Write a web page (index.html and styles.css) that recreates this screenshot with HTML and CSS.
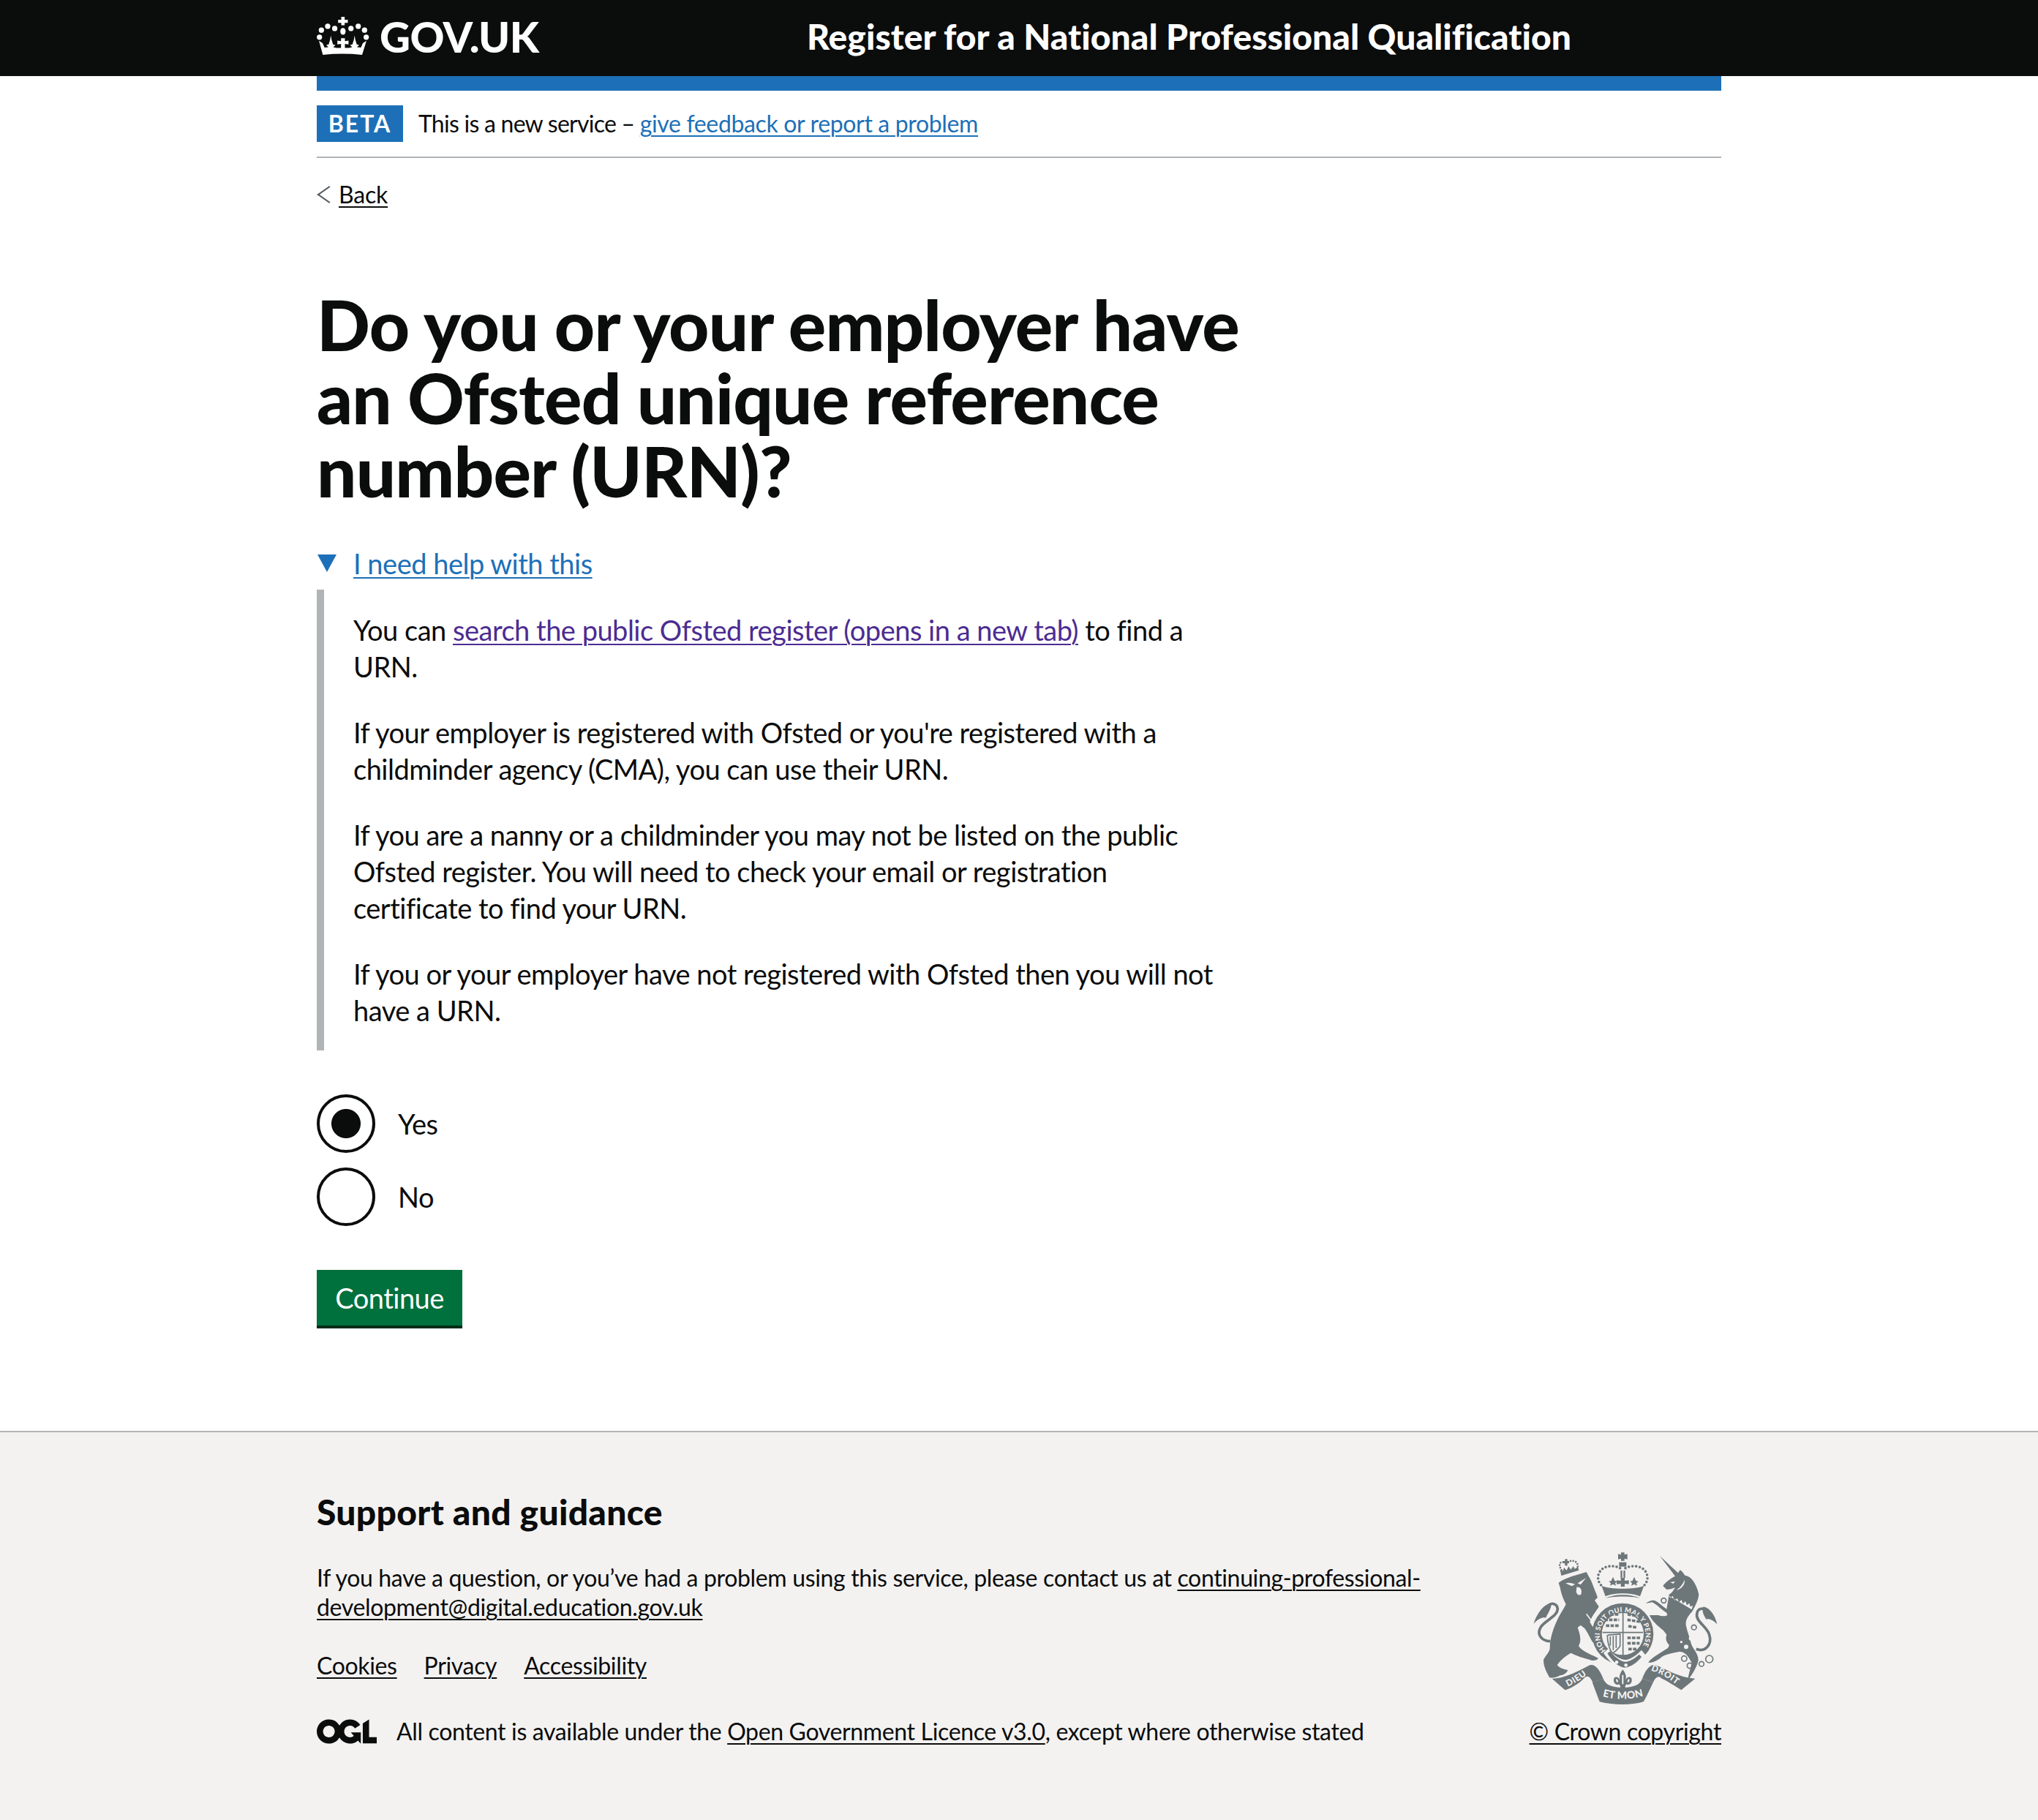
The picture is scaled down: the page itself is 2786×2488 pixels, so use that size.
FILE: index.html
```html
<!DOCTYPE html>
<html lang="en">
<head>
  <meta charset="UTF-8" />
  <title>Do you or your employer have an Ofsted unique reference number (URN)?</title>
  <link rel="stylesheet" href="styles.css">
</head>
<body>

<header class="site-header">
  <div class="header-inner">
    <a href="#" class="logo">
      <svg class="crown" viewBox="40 40 215 160" aria-hidden="true">
        <path d="M140 40h14v12h13v13h-13v10h-14V65h-13V52h13z" />
        <ellipse cx="147" cy="100" rx="11" ry="14" />
        <circle cx="113" cy="88" r="11" />
        <circle cx="180" cy="88" r="11" />
        <circle cx="84" cy="79" r="11" />
        <circle cx="210" cy="79" r="11" />
        <circle cx="58" cy="95" r="11" />
        <circle cx="236" cy="95" r="11" />
        <circle cx="50" cy="124" r="11" />
        <circle cx="243" cy="124" r="11" />
        <path d="M48 139l15 10 8 18 16-2-9-9 10-2 6-20 3-17 3 17 6 20 10 2-9 9 14 3h50l14-3-9-9 10-2 6-20 3-17 3 17 6 20 10 2-9 9 16 2 8-18 15-10-18 58q-81-9-162 0z" />
        <path d="M139 128h16v12l15-2v16l-15-2v18h-16v-18l-15 2v-16l15 2z" />
      </svg>
      <span class="logo-text">GOV.UK</span>
    </a>
    <a href="#" class="service-name">Register for a National Professional Qualification</a>
  </div>
</header>

<div class="container">
  <div class="header-rule"></div>

  <div class="phase-banner">
    <strong class="tag">BETA</strong>
    <span class="phase-text">This is a new service – <a href="#" class="link">give feedback or report a problem</a></span>
  </div>

  <a href="#" class="back-link">Back</a>

  <main class="content">
    <h1>Do you or your employer have an Ofsted unique reference number (URN)?</h1>

    <details class="help" open>
      <summary><span class="link">I need help with this</span></summary>
      <div class="help-text">
        <p>You can <a href="#" class="link visited">search the public Ofsted register (opens in a new tab)</a> to find a URN.</p>
        <p>If your employer is registered with Ofsted or you're registered with a childminder agency (CMA), you can use their URN.</p>
        <p>If you are a nanny or a childminder you may not be listed on the public Ofsted register. You will need to check your email or registration certificate to find your URN.</p>
        <p>If you or your employer have not registered with Ofsted then you will not have a URN.</p>
      </div>
    </details>

    <form>
      <div class="radios">
        <label class="radio"><input type="radio" name="urn" checked /><span>Yes</span></label>
        <label class="radio"><input type="radio" name="urn" /><span>No</span></label>
      </div>
      <button type="button">Continue</button>
    </form>
  </main>
</div>

<footer class="site-footer">
  <div class="footer-inner">
    <div class="footer-main">
      <h2>Support and guidance</h2>
      <p>If you have a question, or you’ve had a problem using this service, please contact us at <a href="#">continuing-professional-development@digital.education.gov.uk</a></p>
      <ul class="footer-links">
        <li><a href="#">Cookies</a></li>
        <li><a href="#">Privacy</a></li>
        <li><a href="#">Accessibility</a></li>
      </ul>
      <div class="licence">
        <svg class="ogl" viewBox="0 0 483.2 195.7" aria-hidden="true">
          <path d="M421.5 142.8V.1l-50.7 32.3v161.1h112.4v-50.7zm-122.3-9.6A47.12 47.12 0 0 1 221 97.8c0-26 21.1-47.1 47.1-47.1 16.7 0 31.4 8.7 39.7 21.8l42.7-27.2A97.63 97.63 0 0 0 268.1 0c-36.5 0-68.3 20.1-85.1 49.7A98 98 0 0 0 97.8 0C43.9 0 0 43.9 0 97.8s43.9 97.8 97.8 97.8c36.5 0 68.3-20.1 85.1-49.7a97.76 97.76 0 0 0 149.6 25.4l19.4 22.2h3v-87.8h-80l24.3 27.5zM97.8 145c-26 0-47.1-21.1-47.1-47.1s21.1-47.1 47.1-47.1 47.2 21 47.2 47S123.8 145 97.8 145" />
        </svg>
        <span>All content is available under the <a href="#">Open Government Licence v3.0</a>, except where otherwise stated</span>
      </div>
    </div>

    <div class="footer-side">
      <svg class="crest" viewBox="0 0 780 660" aria-hidden="true">
        <defs>
          <path id="garter" d="M318 432 A94 94 0 1 1 452 432" />
          <path id="ribbon-left" d="M160 578 Q208 556 254 516" />
          <path id="ribbon-mid" d="M302 618 Q385 640 472 616" />
          <path id="ribbon-right" d="M500 512 Q552 526 618 580" />
        </defs>

        <!-- couronne du lion -->
        <path class="dots small" d="M134 100C115 70 135 60 153 72 170 55 205 60 200 88" />
        <path d="M148 55h10v8h7v9h-7v10h-10V72h-7v-9h7z" />
        <path d="M128 98l12 6 4-14 11 11 8-16 9 13 10-14 6 11 13-8 4 14-72 22z" />

        <!-- lion -->
        <path d="M122 152C150 130 205 118 236 108 244 125 252 135 258 150 266 172 276 195 282 212L270 224 287 250C278 268 262 282 250 312 262 340 290 360 300 392 290 402 272 402 262 396 250 378 240 352 228 338L212 326 200 336C208 360 218 385 204 412 222 438 262 448 285 462 280 470 262 474 250 468 222 460 196 452 172 440 152 452 130 468 116 490 128 504 148 508 160 510 155 522 142 532 128 532 118 540 96 544 84 540 74 520 60 498 60 468 68 450 84 438 86 422 86 380 100 340 116 306 128 280 144 258 152 240 142 222 132 198 128 172z" />
        <path class="cut" d="M150 154C162 150 175 152 190 158L176 166zM235 132L200 154 212 160zM196 170C212 168 220 182 214 200 206 206 196 200 194 188z" />
        <path class="line thin cut-line" d="M236 280L296 362" />
        <path class="line" d="M88 392C50 390 30 362 50 332 70 304 118 290 118 258 115 238 95 232 80 244" />
        <path d="M92 238C60 236 30 285 20 320 40 298 58 292 70 296 76 278 92 262 92 238z" />

        <!-- couronne centrale -->
        <path d="M378 28h14v9l12-3v22l-12-3v9h-14v-9l-12 3V34l12 3z" />
        <path d="M370 68h30v18h-30z" />
        <path class="dots" d="M374 92C345 78 305 82 290 108 278 130 284 150 300 166" />
        <path class="dots" d="M396 92C425 78 465 82 480 108 492 130 486 150 470 166" />
        <path d="M376 102h7v30h-7zM388 102h7v30h-7z" />
        <path d="M345 128l7 16 10 2-8 8 3 10-12-6-12 6 3-10-8-8 10-2zM432 128l7 16 10 2-8 8 3 10-12-6-12 6 3-10-8-8 10-2z" />
        <path d="M377 132h16v12l17-2v16l-17-2v12h-16v-12l-17 2v-16l17 2z" />
        <path d="M298 164C330 180 440 180 472 164L456 208C420 192 350 192 314 208z" />
        <path d="M312 218C340 196 430 196 458 218 440 205 330 205 312 218z" />

        <!-- jarretiere et ecu -->
        <circle cx="385" cy="362" r="126" />
        <circle class="cut" cx="385" cy="362" r="86" />
        <text class="crest-text garter-text"><textPath href="#garter" startOffset="3">HONI SOIT QUI MAL Y PENSE</textPath></text>
        <path class="line thin" d="M386 262v190M302 356h166" />
        <g class="beasts">
          <path d="M315 282h56M310 304h60M316 328h52" />
          <path d="M405 282l40 6M404 304l52 8M408 330l36 6" />
          <path d="M404 378h52M404 400h50M408 424h36" />
        </g>
        <path class="line thin" d="M322 368C340 362 360 366 374 362V412C362 428 352 438 342 440 330 425 322 395 322 368z" />
        <path class="line thin" d="M334 372v38M346 370v58M358 368v52" />
        <path class="cut" d="M306 440L326 422C345 450 380 470 400 468 425 462 445 445 462 428L478 448C455 480 425 505 390 508 360 505 330 475 306 440z" />
        <path d="M322 442L334 432C350 455 378 478 400 476 420 472 440 458 452 446L462 456C445 478 420 498 392 500 365 498 340 470 322 442z" />
        <circle class="cut" cx="360" cy="478" r="7" />
        <circle class="cut" cx="398" cy="490" r="7" />

        <!-- licorne -->
        <path d="M537 42L612 112 620 100C630 105 635 115 640 122 670 125 690 165 697 200 695 225 680 250 670 270 650 290 640 310 645 330 650 355 660 375 665 400 672 425 695 440 695 470 690 495 672 525 655 548 650 540 662 510 668 480 655 455 640 432 615 435 590 440 560 445 545 456 530 470 510 480 490 480 495 465 530 445 570 420L576 408C566 398 558 385 565 365L552 348C530 330 505 310 495 285L530 285C545 290 560 290 568 285L565 275C545 265 525 240 505 232L480 237C490 228 505 222 515 225 530 230 550 250 565 260L575 200C585 195 592 185 600 172 590 175 575 180 565 180L550 165C560 150 580 135 600 125z" />
        <path class="cut" d="M572 204L668 262 672 246 662 250 658 236 648 244 642 228 632 238 626 222 616 232 608 216 598 224 590 206 580 214z" />
        <path class="cut" d="M580 150L600 146 592 156zM638 140C642 160 625 178 605 182 620 172 632 158 638 140z" />
        <circle class="cut" cx="665" cy="380" r="9" />
        <circle class="cut" cx="645" cy="415" r="9" />
        <circle class="cut" cx="625" cy="395" r="5" />
        <g class="rings">
          <circle cx="553" cy="225" r="10" />
          <circle cx="540" cy="310" r="10" />
          <circle cx="677" cy="335" r="10" />
          <circle cx="637" cy="463" r="11" />
          <circle cx="660" cy="492" r="11" />
          <circle cx="708" cy="485" r="10" />
          <circle cx="740" cy="465" r="15" />
        </g>
        <path class="line" d="M686 424C725 438 752 405 740 365 730 330 680 310 690 275 695 255 715 255 728 264" />
        <path d="M716 250C745 256 765 290 772 322 752 302 738 298 728 302 716 285 708 268 716 250z" />

        <!-- devise -->
        <path d="M95 545C150 545 210 510 250 490 275 482 295 520 305 545L262 560C250 535 240 530 225 545 200 570 170 585 148 592z" />
        <path d="M260 560L305 545C315 570 335 580 385 582 435 580 455 570 465 545L510 560C495 590 480 625 470 640 420 655 350 655 290 640z" />
        <path d="M465 545C478 510 498 485 520 490 560 505 610 540 682 545L625 592C590 570 560 550 545 545 530 530 520 540 510 560z" />
        <text class="crest-text"><textPath href="#ribbon-left">DIEU</textPath></text>
        <text class="crest-text mid-text"><textPath href="#ribbon-mid">ET MON</textPath></text>
        <text class="crest-text"><textPath href="#ribbon-right">DROIT</textPath></text>
        <path d="M385 508C396 522 402 538 396 552 404 534 424 534 422 554 420 570 406 572 400 568L394 578 402 590H392L385 600 378 590H368L376 578 370 568C364 572 350 570 348 554 346 534 366 534 374 552 368 538 374 522 385 508z" />
        <path class="cut" d="M382 530h6v38h-6zM358 546q8 2 8 14-10 2-8-14zM412 546q-8 2-8 14 10 2 8-14z" />
      </svg>
      <a href="#">© Crown copyright</a>
    </div>
  </div>
</footer>

</body>
</html>
```
FILE: styles.css
```css
* {
  box-sizing: border-box;
}

body {
  margin: 0;
  min-height: 100vh;
  display: flex;
  flex-direction: column;
  font-family: Lato, "Noto Sans", sans-serif;
  font-size: 38px;
  line-height: 50px;
  letter-spacing: -0.5px;
  color: #0b0c0c;
  background: #fff;
}

a {
  color: inherit;
  text-decoration-thickness: 2px;
  text-underline-offset: 4px;
}

/* entete */
.site-header {
  background: #0b0c0c;
  color: #fff;
}

.header-inner {
  width: 1920px;
  height: 104px;
  margin: 0 auto;
  padding-bottom: 5px;
  display: flex;
  align-items: center;
}

.logo {
  width: 670px;
  display: flex;
  align-items: center;
  gap: 14px;
  text-decoration: none;
}

.crown {
  width: 72px;
  height: 53px;
  fill: #fff;
}

.logo-text {
  font-size: 58px;
  font-weight: 900;
  letter-spacing: -0.55px;
}

.service-name {
  font-size: 48px;
  font-weight: 900;
  letter-spacing: 0.04px;
  text-decoration: none;
}

.container {
  width: 1920px;
  margin: 0 auto;
}

.header-rule {
  height: 20px;
  background: #1d70b8;
}

.phase-banner {
  display: flex;
  align-items: center;
  gap: 21px;
  padding: 20px 0;
  border-bottom: 2px solid #b1b4b6;
  font-size: 32px;
  letter-spacing: -0.75px;
}

.phase-text .link {
  letter-spacing: -0.35px;
}

.tag {
  width: 118px;
  height: 50px;
  background: #1d70b8;
  color: #fff;
  font-size: 32px;
  line-height: 50px;
  letter-spacing: 2px;
  text-align: center;
}

.link {
  color: #1d70b8;
  text-decoration: underline;
  text-decoration-thickness: 2px;
  text-underline-offset: 4px;
}

.visited {
  color: #4c2c92;
}

.back-link {
  display: inline-flex;
  align-items: center;
  margin-top: 30px;
  font-size: 32px;
  line-height: 40px;
  letter-spacing: -0.2px;
}

.back-link::before {
  content: "";
  width: 18px;
  height: 18px;
  margin: 0 3px 0 7px;
  border-left: 2px solid #505a5f;
  border-bottom: 2px solid #505a5f;
  transform: rotate(45deg) skew(-10deg, -10deg);
}

.content {
  width: 1280px;
  padding-bottom: 140px;
}

h1 {
  margin: 107px 0 52px;
  font-size: 96px;
  line-height: 100px;
  font-weight: 900;
  letter-spacing: -0.8px;
}

/* aide */
.help {
  width: 1250px;
  margin-bottom: 60px;
}

.help summary {
  display: flex;
  align-items: center;
  height: 50px;
  margin-bottom: 11px;
  list-style: none;
  cursor: pointer;
}

.help summary::before {
  content: "";
  width: 0;
  height: 0;
  margin: 0 23px 0 1px;
  border-left: 13px solid transparent;
  border-right: 13px solid transparent;
  border-top: 24px solid #1d70b8;
}

.help-text {
  padding: 30px 0 30px 40px;
  border-left: 10px solid #b1b4b6;
}

.help-text p {
  margin: 0 0 40px;
}

.help-text p:last-child {
  margin-bottom: 0;
}

/* radios */
.radios {
  display: flex;
  flex-direction: column;
  gap: 20px;
  margin-bottom: 60px;
}

.radio {
  display: flex;
  align-items: center;
  gap: 31px;
  cursor: pointer;
}

.radio input {
  appearance: none;
  width: 80px;
  height: 80px;
  margin: 0;
  border: 4px solid #0b0c0c;
  border-radius: 50%;
  background: #fff;
}

.radio input:checked {
  background: radial-gradient(circle, #0b0c0c 19.5px, #fff 20.5px);
}

button {
  display: block;
  width: 199px;
  height: 80px;
  padding: 0;
  background: #00703c;
  color: #fff;
  border: none;
  border-bottom: 4px solid #002d18;
  font: inherit;
  letter-spacing: inherit;
  cursor: pointer;
}

/* pied de page */
.site-footer {
  flex: 1;
  background: #f3f2f1;
  border-top: 2px solid #b1b4b6;
  font-size: 32px;
  line-height: 40px;
  letter-spacing: -0.35px;
}

.footer-inner {
  width: 1920px;
  margin: 0 auto;
  padding-top: 79px;
  display: flex;
  justify-content: space-between;
  align-items: flex-end;
}

.footer-main {
  width: 1560px;
}

.footer-main h2 {
  margin: 0 0 40px;
  font-size: 48px;
  line-height: 60px;
  font-weight: 900;
  letter-spacing: 0.3px;
}

.footer-main p {
  margin: 0 0 40px;
}

.footer-links {
  display: flex;
  gap: 37px;
  margin: 0 0 50px;
  padding: 0;
  list-style: none;
}

.licence {
  display: flex;
  align-items: center;
  gap: 27px;
}

.ogl {
  width: 82px;
  height: 34px;
  fill: #0b0c0c;
}

.footer-side {
  display: flex;
  flex-direction: column;
  align-items: flex-end;
}

.crest {
  display: block;
  width: 260px;
  height: 220px;
  margin: 0 3px 14px 0;
  fill: #6d7679;
}

.crest .cut {
  fill: #f3f2f1;
}

.crest .line {
  fill: none;
  stroke: #6d7679;
  stroke-width: 11;
}

.crest .line.thin {
  stroke-width: 5;
}

.crest .line.cut-line {
  stroke: #f3f2f1;
}

.crest .dots {
  fill: none;
  stroke: #6d7679;
  stroke-width: 11;
  stroke-linecap: round;
  stroke-dasharray: 0 15;
}

.crest .dots.small {
  stroke-width: 8;
  stroke-dasharray: 0 11;
}

.crest .rings circle {
  fill: none;
  stroke: #6d7679;
  stroke-width: 5;
}

.crest .beasts path {
  fill: none;
  stroke: #6d7679;
  stroke-width: 11;
  stroke-dasharray: 14 5;
}

.crest-text {
  font-size: 36px;
  font-weight: 900;
  letter-spacing: 2px;
  fill: #f3f2f1;
}

.mid-text {
  font-size: 42px;
  letter-spacing: 1px;
}

.garter-text {
  font-size: 28px;
  letter-spacing: 1px;
}
```
